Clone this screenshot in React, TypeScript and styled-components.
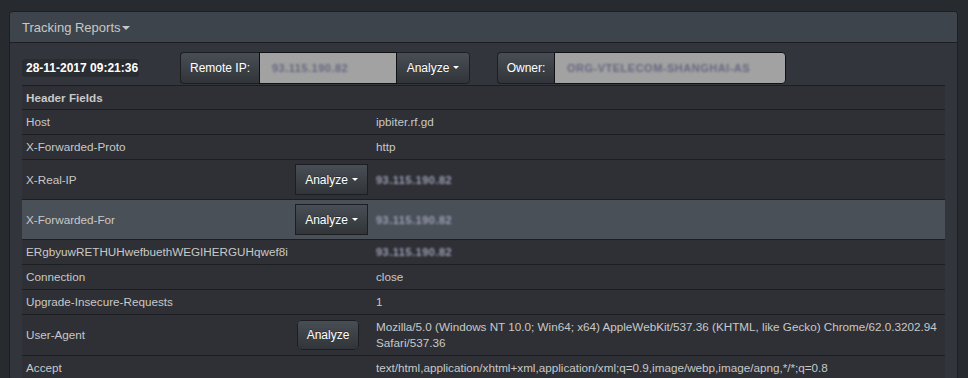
import styled, { createGlobalStyle } from 'styled-components';

/* Global */
const GlobalStyle = createGlobalStyle`
  html, body {
    margin: 0;
    padding: 0;
    background-color: #272b30;
    font-family: 'Liberation Sans', Arial, sans-serif;
    font-size: 12px;
    color: #c8c8c8;
  }
  * {
    box-sizing: border-box;
  }
`;

/* Panel */
const Page = styled.div`
  padding: 11px 10px 0 9px;
  height: 378px;
  overflow: hidden;
`;
const Panel = styled.section`
  border: 1px solid #1c1e22;
  border-radius: 4px;
  background-color: #32363c;
  overflow: hidden;
`;
const PanelHeading = styled.header`
  height: 31px;
  padding: 0 12px;
  display: flex;
  align-items: center;
  background-color: #3e444b;
  border-bottom: 1px solid #1c1e22;
  font-size: 13px;
  color: #c8c8c8;
`;
const Caret = styled.span`
  display: inline-block;
  width: 0;
  height: 0;
  margin-left: 1px;
  margin-top: 1px;
  border-top: 4px solid #c8c8c8;
  border-left: 4px solid transparent;
  border-right: 4px solid transparent;
`;
const PanelBody = styled.div`
  padding: 8px 12px 0 12px;
`;

/* Toolbar */
const Toolbar = styled.div`
  display: flex;
  align-items: center;
  height: 33px;
  margin-bottom: 1px;
`;
const DateBadge = styled.span`
  flex-shrink: 0;
  display: inline-block;
  width: 117px;
  height: 18px;
  line-height: 18px;
  padding-left: 4px;
  background-color: #292c31;
  border-radius: 3px;
  font-weight: 700;
  color: #fff;
  white-space: nowrap;
`;
const InputGroup = styled.div<{ $ml: number }>`
  display: flex;
  height: 32px;
  margin-left: ${(p) => p.$ml}px;
`;
const Addon = styled.span<{ $w: number }>`
  width: ${(p) => p.$w}px;
  display: flex;
  align-items: center;
  justify-content: center;
  background-image: linear-gradient(#484e55, #3a3f44 60%, #313539);
  border: 1px solid #1c1e22;
  border-right: none;
  border-radius: 4px 0 0 4px;
  color: #fff;
  font-size: 12px;
`;
const Field = styled.div<{ $w: number; $last?: boolean }>`
  width: ${(p) => p.$w}px;
  display: flex;
  align-items: center;
  padding-left: 12px;
  background-color: #a2a2a2;
  border: 1px solid #111;
  border-radius: ${(p) => (p.$last ? '0 4px 4px 0' : '0')};
`;
const Hidden = styled.span<{ $c?: string }>`
  color: ${(p) => p.$c || '#666880'};
  filter: blur(1.3px);
  letter-spacing: 0.5px;
  font-size: 11px;
  font-weight: 700;
  white-space: nowrap;
`;
const GroupButton = styled.button`
  width: 73px;
  display: flex;
  align-items: center;
  justify-content: center;
  gap: 4px;
  padding: 0;
  background-image: linear-gradient(#484e55, #3a3f44 60%, #313539);
  border: 1px solid #1c1e22;
  border-left: none;
  border-radius: 0 4px 4px 0;
  color: #fff;
  font-family: inherit;
  font-size: 12px;
  text-shadow: 0 -1px 0 rgba(0, 0, 0, 0.3);
`;
const SmallCaret = styled.span`
  display: inline-block;
  width: 0;
  height: 0;
  border-top: 3px solid #fff;
  border-left: 3px solid transparent;
  border-right: 3px solid transparent;
`;

/* Table */
const Table = styled.table`
  width: 100%;
  table-layout: fixed;
  border-collapse: collapse;
  background-color: #2e3035;
  border-top: 1px solid #1c1e22;
  font-size: 11.7px;
`;
const Row = styled.tr<{ $active?: boolean }>`
  background-color: ${(p) => (p.$active ? '#4a5058' : 'transparent')};
  border-top: 1px solid #1c1e22;
`;
const HeadCell = styled.th`
  text-align: left;
  padding: 4px 4px;
  line-height: 15px;
  font-weight: 700;
  color: #c8c8c8;
`;
const Col = styled.col<{ $w?: number }>`
  width: ${(p) => (p.$w ? `${p.$w}px` : 'auto')};
`;
const Cell = styled.td`
  padding: 4px 4px;
  line-height: 16px;
  vertical-align: middle;
  color: #c8c8c8;
`;
const AnalyzeButton = styled.button<{ $dropdown?: boolean }>`
  height: ${(p) => (p.$dropdown ? 31 : 30)}px;
  width: ${(p) => (p.$dropdown ? 73 : 62)}px;
  margin-left: ${(p) => (p.$dropdown ? 0 : 2)}px;
  display: flex;
  align-items: center;
  justify-content: center;
  gap: 4px;
  padding: 0;
  background-image: linear-gradient(#484e55, #3a3f44 60%, #313539);
  border: 1px solid #1c1e22;
  border-radius: ${(p) => (p.$dropdown ? 0 : 4)}px;
  color: #fff;
  font-family: inherit;
  font-size: 12px;
  text-shadow: 0 -1px 0 rgba(0, 0, 0, 0.3);
`;

type HeaderRow = {
  name: string;
  value: React.ReactNode;
  button?: 'dropdown' | 'plain';
  active?: boolean;
};

const ip = <Hidden $c='#9c9eb4'>93.115.190.82</Hidden>;

const rows: HeaderRow[] = [
  { name: 'Host', value: 'ipbiter.rf.gd' },
  { name: 'X-Forwarded-Proto', value: 'http' },
  { name: 'X-Real-IP', value: ip, button: 'dropdown' },
  { name: 'X-Forwarded-For', value: ip, button: 'dropdown', active: true },
  { name: 'ERgbyuwRETHUHwefbuethWEGIHERGUHqwef8i', value: ip },
  { name: 'Connection', value: 'close' },
  { name: 'Upgrade-Insecure-Requests', value: '1' },
  {
    name: 'User-Agent',
    value:
      'Mozilla/5.0 (Windows NT 10.0; Win64; x64) AppleWebKit/537.36 (KHTML, like Gecko) Chrome/62.0.3202.94 Safari/537.36',
    button: 'plain',
  },
  {
    name: 'Accept',
    value:
      'text/html,application/xhtml+xml,application/xml;q=0.9,image/webp,image/apng,*/*;q=0.8',
  },
];

export default function App() {
  return (
    <>
      <GlobalStyle />
      <Page>
        <Panel>
          <PanelHeading>
            Tracking Reports
            <Caret />
          </PanelHeading>

          <PanelBody>
            <Toolbar>
              <DateBadge>28-11-2017 09:21:36</DateBadge>

              <InputGroup $ml={41}>
                <Addon $w={79}>Remote IP:</Addon>
                <Field $w={138}>
                  <Hidden>93.115.190.82</Hidden>
                </Field>
                <GroupButton>
                  Analyze <SmallCaret />
                </GroupButton>
              </InputGroup>

              <InputGroup $ml={27}>
                <Addon $w={57}>Owner:</Addon>
                <Field $w={232} $last>
                  <Hidden>ORG-VTELECOM-SHANGHAI-AS</Hidden>
                </Field>
              </InputGroup>
            </Toolbar>

            <Table>
              <colgroup>
                <Col $w={269} />
                <Col $w={81} />
                <Col />
              </colgroup>
              <tbody>
                <Row>
                  <HeadCell colSpan={3}>Header Fields</HeadCell>
                </Row>
                {rows.map((row) => (
                  <Row key={row.name} $active={row.active}>
                    <Cell>{row.name}</Cell>
                    <Cell>
                      {row.button === 'dropdown' && (
                        <AnalyzeButton $dropdown>
                          Analyze <SmallCaret />
                        </AnalyzeButton>
                      )}
                      {row.button === 'plain' && (
                        <AnalyzeButton>Analyze</AnalyzeButton>
                      )}
                    </Cell>
                    <Cell>{row.value}</Cell>
                  </Row>
                ))}
              </tbody>
            </Table>
          </PanelBody>
        </Panel>
      </Page>
    </>
  );
}
